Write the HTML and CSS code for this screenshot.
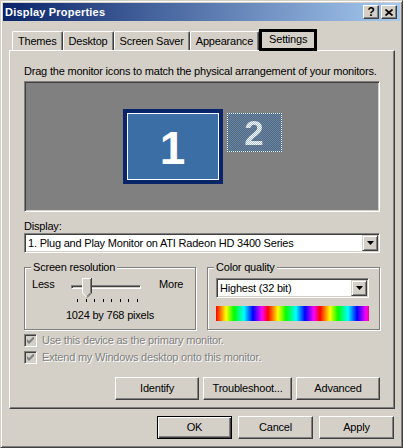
FILE: index.html
```html
<!DOCTYPE html>
<html lang="en">
<head>
    <meta charset="UTF-8">
    <meta name="viewport" content="width=device-width, initial-scale=1.0">
    <title>Display Properties</title>
    <link rel="stylesheet" href="styles.css">
</head>
<body>
    <div class="window">
        <div class="titlebar">
            <span class="title">Display Properties</span>
            <div class="title-buttons">
                <div class="tbtn help">?</div>
                <div class="tbtn">
                    <svg width="8" height="7" viewBox="0 0 8 7"><path d="M0.5 0.5L7.5 6.5M7.5 0.5L0.5 6.5" stroke="#000" stroke-width="1.7"/></svg>
                </div>
            </div>
        </div>

        <div class="tabs">
            <div class="tab">Themes</div>
            <div class="tab">Desktop</div>
            <div class="tab">Screen Saver</div>
            <div class="tab">Appearance</div>
            <div class="tab active">Settings</div>
        </div>

        <div class="panel">
            <p class="hint">Drag the monitor icons to match the physical arrangement of your monitors.</p>

            <div class="monitors">
                <div class="monitor primary"><span>1</span></div>
                <div class="monitor secondary"><span>2</span></div>
            </div>

            <div class="field-label">Display:</div>
            <div class="combo">
                <span>1. Plug and Play Monitor on ATI Radeon HD 3400 Series</span>
                <div class="drop"><svg width="7" height="4" viewBox="0 0 7 4"><path d="M0 0H7L3.5 4Z" fill="#000"/></svg></div>
            </div>

            <div class="groups">
                <div class="group res">
                    <span class="group-label">Screen resolution</span>
                    <div class="res-row">
                        <span>Less</span>
                        <div class="slider-col">
                            <div class="slider">
                                <div class="track"></div>
                                <svg class="thumb" width="10" height="20" viewBox="0 0 10 20">
                                    <path d="M0 0H10V15L5 20L0 15Z" fill="#d4d0c8"/>
                                    <path d="M0.5 15V0.5H9" fill="none" stroke="#fff"/>
                                    <path d="M0.5 15L4.5 19" fill="none" stroke="#fff"/>
                                    <path d="M9.5 0V15L5 19.5" fill="none" stroke="#404040"/>
                                    <path d="M8.5 1V14.6L5 18.1" fill="none" stroke="#808080"/>
                                </svg>
                            </div>
                            <div class="ticks"><i></i><i></i><i></i><i></i><i></i><i></i><i></i><i></i></div>
                        </div>
                        <span class="more">More</span>
                    </div>
                    <div class="res-value">1024 by 768 pixels</div>
                </div>

                <div class="group color">
                    <span class="group-label">Color quality</span>
                    <div class="combo">
                        <span>Highest (32 bit)</span>
                        <div class="drop"><svg width="7" height="4" viewBox="0 0 7 4"><path d="M0 0H7L3.5 4Z" fill="#000"/></svg></div>
                    </div>
                    <div class="spectrum"></div>
                </div>
            </div>

            <div class="checks">
                <div class="check-row">
                    <div class="checkbox"><svg width="7" height="7" viewBox="0 0 7 7"><path d="M0 2L2 4L6 0H7V2L2 7L0 5Z" fill="#808080"/></svg></div>
                    <span>Use this device as the primary monitor.</span>
                </div>
                <div class="check-row">
                    <div class="checkbox"><svg width="7" height="7" viewBox="0 0 7 7"><path d="M0 2L2 4L6 0H7V2L2 7L0 5Z" fill="#808080"/></svg></div>
                    <span>Extend my Windows desktop onto this monitor.</span>
                </div>
            </div>

            <div class="actions">
                <div class="btn identify">Identify</div>
                <div class="btn trouble">Troubleshoot...</div>
                <div class="btn advanced">Advanced</div>
            </div>
        </div>

        <div class="footer">
            <div class="btn default">OK</div>
            <div class="btn">Cancel</div>
            <div class="btn">Apply</div>
        </div>
    </div>
</body>
</html>
```

FILE: styles.css
```css
* {
    margin: 0;
    padding: 0;
    box-sizing: border-box;
}

body {
    background: #d4d0c8;
    font-family: "Liberation Sans", Arial, sans-serif;
    font-size: 11px;
    line-height: 13px;
    letter-spacing: -0.2px;
    color: #000;
}

.window {
    width: 403px;
    height: 448px;
    display: flex;
    flex-direction: column;
    padding: 2px;
    border: 1px solid;
    border-color: #d4d0c8 #404040 #404040 #d4d0c8;
    box-shadow: inset 1px 1px #fff, inset -1px -1px #808080;
}

/* title bar */
.titlebar {
    height: 18px;
    display: flex;
    align-items: center;
    justify-content: space-between;
    padding: 0 3px 0 2px;
    background: linear-gradient(to right, #0a246a, #a6caf0);
    color: #fff;
}

.title {
    font-weight: bold;
    letter-spacing: 0.2px;
}

.title-buttons {
    display: flex;
    gap: 2px;
}

.tbtn {
    width: 16px;
    height: 14px;
    display: flex;
    align-items: center;
    justify-content: center;
    background: #d4d0c8;
    border: 1px solid;
    border-color: #fff #404040 #404040 #fff;
    box-shadow: inset -1px -1px #808080;
    color: #000;
}

.help {
    font-weight: bold;
    font-size: 12px;
}

/* tabs */
.tabs {
    height: 29px;
    display: flex;
    align-items: flex-end;
    padding-left: 9px;
}

.tab {
    height: 19px;
    display: flex;
    align-items: center;
    padding: 0 5px;
    border: 1px solid;
    border-bottom: none;
    border-color: #fff #404040 transparent #fff;
    box-shadow: inset -1px 0 #808080;
    border-radius: 2px 2px 0 0;
}

.tab.active {
    position: relative;
    z-index: 1;
    height: 22px;
    margin-bottom: -1px;
    padding: 0 7px 2px;
    border: 3px solid #000;
    border-radius: 0;
    box-shadow: none;
    background: #d4d0c8;
}

/* tab page */
.panel {
    height: 359px;
    display: flex;
    flex-direction: column;
    margin: 0 5px 0 6px;
    padding: 14px 14px 8px;
    border: 1px solid;
    border-color: #fff #404040 #404040 #fff;
    box-shadow: inset -1px -1px #808080;
}

.monitors {
    height: 131px;
    margin-top: 3px;
    display: flex;
    justify-content: center;
    align-items: flex-start;
    gap: 4px;
    padding: 27px 0 0 0;
    background: #808080;
    border: 1px solid;
    border-color: #808080 #fff #fff #808080;
    box-shadow: inset 1px 1px #404040, inset -1px -1px #d4d0c8;
}

.monitor {
    display: flex;
    align-items: center;
    justify-content: center;
    font-weight: bold;
    line-height: 1;
    letter-spacing: 0;
}

.primary {
    width: 100px;
    height: 75px;
    background: #3a6ea5;
    border: 4px solid #0a246a;
    box-shadow: inset 0 0 0 1px #fff;
    color: #fff;
    font-size: 46px;
    padding-top: 3px;
}

.secondary {
    width: 55px;
    height: 39px;
    margin-top: 4px;
    border: 1px dotted #fff;
    background: repeating-conic-gradient(#3a6ea5 0 25%, #808080 0 50%) 0 0 / 2px 2px;
    font-size: 35px;
}

.secondary span {
    color: transparent;
    background: repeating-conic-gradient(#fff 0 25%, #a8bcd2 0 50%) 0 0 / 2px 2px;
    -webkit-background-clip: text;
    background-clip: text;
}

.field-label {
    margin-top: 8px;
}

/* combo box */
.combo {
    height: 20px;
    display: flex;
    align-items: center;
    justify-content: space-between;
    padding: 1px 1px 1px 3px;
    background: #fff;
    border: 1px solid;
    border-color: #808080 #fff #fff #808080;
    box-shadow: inset 1px 1px #404040, inset -1px -1px #d4d0c8;
}

.drop {
    width: 16px;
    height: 16px;
    display: flex;
    align-items: center;
    justify-content: center;
    background: #d4d0c8;
    border: 1px solid;
    border-color: #d4d0c8 #404040 #404040 #d4d0c8;
    box-shadow: inset 1px 1px #fff, inset -1px -1px #808080;
}

/* group boxes */
.groups {
    display: flex;
    gap: 11px;
    margin-top: 14px;
}

.group {
    height: 63px;
    display: flex;
    flex-direction: column;
    border: 1px solid #808080;
    box-shadow: 1px 1px #fff, inset 1px 1px #fff;
}

.res {
    width: 172px;
    padding: 0 0 0 7px;
}

.color {
    flex: 1;
    padding: 0 10px 0 8px;
}

.group-label {
    align-self: flex-start;
    margin: -7px 0 0 -1px;
    padding: 0 2px;
    background: #d4d0c8;
}

.color .group-label {
    margin-left: -2px;
}

.res-row {
    display: flex;
    align-items: flex-start;
    margin-top: 4px;
}

.res-row span {
    width: 39px;
}

.res-row .more {
    width: auto;
    margin-left: 18px;
}

.slider-col {
    width: 70px;
}

.slider {
    position: relative;
    height: 20px;
}

.track {
    position: absolute;
    left: 0;
    right: 0;
    top: 7px;
    height: 4px;
    border: 1px solid;
    border-color: #808080 #fff #fff #808080;
    box-shadow: inset 1px 1px #404040;
}

.thumb {
    position: absolute;
    left: 11px;
    top: 0;
}

.ticks {
    width: 61px;
    height: 3px;
    margin: 1px 0 0 6px;
    display: flex;
    justify-content: space-between;
}

.ticks i {
    width: 1px;
    background: #000;
}

.res-value {
    margin: 7px 0 0 -7px;
    text-align: center;
}

.color .combo {
    margin-top: 4px;
}

.spectrum {
    height: 15px;
    margin-top: 8px;
    background: repeating-linear-gradient(to right, #f00 0, #ff0 10px, #0f0 18px, #0ff 28px, #00f 37px, #f0f 46px, #f00 52px);
}

/* checkboxes */
.checks {
    margin-top: 4px;
    display: flex;
    flex-direction: column;
    gap: 4px;
}

.check-row {
    display: flex;
    align-items: center;
    gap: 5px;
    color: #808080;
    text-shadow: 1px 1px #fff;
}

.checkbox {
    width: 13px;
    height: 13px;
    display: flex;
    align-items: center;
    justify-content: center;
    background: #d4d0c8;
    border: 1px solid;
    border-color: #808080 #fff #fff #808080;
    box-shadow: inset 1px 1px #404040, inset -1px -1px #d4d0c8;
}

/* buttons */
.btn {
    width: 75px;
    height: 23px;
    display: flex;
    align-items: center;
    justify-content: center;
    background: #d4d0c8;
    border: 1px solid;
    border-color: #fff #404040 #404040 #fff;
    box-shadow: inset -1px -1px #808080;
}

.btn.default {
    border-color: #000;
    box-shadow: inset 1px 1px #fff, inset -1px -1px #404040, inset -2px -2px #808080;
}

.actions {
    margin-top: auto;
    display: flex;
    justify-content: flex-end;
    gap: 4px;
}

.identify,
.advanced {
    width: 84px;
}

.trouble {
    width: 89px;
}

.footer {
    display: flex;
    justify-content: flex-end;
    gap: 6px;
    padding: 7px 6px 0 0;
}
```
